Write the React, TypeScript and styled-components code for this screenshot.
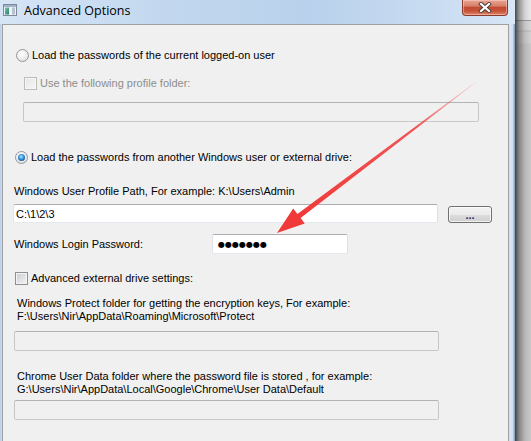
import React from "react";
import styled, { createGlobalStyle, css } from "styled-components";

const Global = createGlobalStyle`
  html, body { margin: 0; padding: 0; background: #f0f0f0; overflow: hidden; }
  body { font-family: "Liberation Sans", Arial, sans-serif; }
  #root { width: 531px; height: 441px; }
`;

const Screen = styled.div`
  position: relative;
  width: 531px;
  height: 441px;
  display: flex;
  overflow: hidden;
`;

const Window = styled.div`
  width: 515px;
  display: flex;
  flex-direction: column;
  flex: none;
`;

const TitleBar = styled.div`
  height: 24px;
  flex: none;
  display: flex;
  align-items: flex-start;
  padding: 0 7px 0 3px;
  box-sizing: border-box;
  background: linear-gradient(to right, #d6e5f6 0%, #c3d8ef 30%, #b9d1ec 60%, #c9dcf1 85%, #d8e6f6 100%);
`;

const AppIcon = styled.svg`
  margin-top: 4px;
  flex: none;
`;

const Title = styled.div`
  margin: 3px 0 0 7px;
  font-family: "Open Sans", "Liberation Sans", sans-serif;
  font-size: 12.5px;
  line-height: 16px;
  color: #000;
`;

const CloseButton = styled.div`
  margin-left: auto;
  width: 46px;
  height: 16px;
  box-sizing: border-box;
  border: 1px solid #8d3a2c;
  border-top: none;
  border-radius: 0 0 4px 4px;
  background: linear-gradient(to bottom, #e9a493 0%, #d8806a 40%, #c24a33 50%, #c95538 75%, #dc8a6c 100%);
  box-shadow: inset 0 0 0 1px rgba(255, 220, 210, 0.45);
  display: flex;
  align-items: center;
  justify-content: center;
`;

const Frame = styled.div`
  flex: 1;
  display: flex;
  padding: 0 6px 0 2px;
  background: linear-gradient(to right, #b9cfe8 0px, #cadcf0 2px, #cadcf0 calc(100% - 6px), #dbe7f5 calc(100% - 5px), #cddff2 calc(100% - 2px), #8fa6c0 calc(100% - 1px));
`;

const Content = styled.div`
  flex: 1;
  background: #f0f0f0;
  border: 1px solid #a0a0a0;
  border-bottom: none;
  display: flex;
  flex-direction: column;
  position: relative;
`;

const Backdrop = styled.div`
  flex: 1;
  display: flex;
  flex-direction: column;
  position: relative;
  &::after {
    content: "";
    position: absolute;
    inset: 0;
    background: linear-gradient(to right, rgba(40, 40, 40, 0.85) 0px, rgba(60, 60, 60, 0.55) 4px, rgba(80, 80, 80, 0.25) 10px, rgba(80, 80, 80, 0.12) 16px);
  }
`;

const BackdropTop = styled.div`
  height: 20px;
  background: #ffffff;
  border-bottom: 1px solid #a9a9a9;
  flex: none;
`;

const BackdropBody = styled.div`
  flex: 1;
  background: linear-gradient(to bottom, #ececec 0px, #ececec 9px, #c9c9c9 10px, #e4e4e4 11px, #e4e4e4 22px, #dadada 23px, #dadada 100%);
`;

const Row = styled.div<{ $top: number; $left: number }>`
  display: flex;
  align-items: center;
  margin-top: ${(p) => p.$top}px;
  padding-left: ${(p) => p.$left}px;
`;

const Label = styled.span<{ $disabled?: boolean; $gap?: number }>`
  font-size: 11px;
  line-height: 13px;
  color: ${(p) => (p.$disabled ? "#8d8d8d" : "#000")};
  margin-left: ${(p) => p.$gap ?? 0}px;
  white-space: nowrap;
`;

const Note = styled.div<{ $top: number; $left: number }>`
  font-size: 11px;
  line-height: 13px;
  color: #000;
  margin-top: ${(p) => p.$top}px;
  padding-left: ${(p) => p.$left}px;
  white-space: pre;
`;

const Radio = styled.span<{ $checked?: boolean }>`
  width: 13px;
  height: 13px;
  box-sizing: border-box;
  border-radius: 50%;
  border: 1px solid #95979a;
  background: radial-gradient(circle at 40% 35%, #ffffff 0%, #efefef 45%, #d6d7d9 100%);
  position: relative;
  flex: none;
  ${(p) =>
    p.$checked &&
    css`
      &::after {
        content: "";
        position: absolute;
        left: 2px;
        top: 2px;
        width: 7px;
        height: 7px;
        border-radius: 50%;
        background: radial-gradient(circle at 45% 40%, #b6ecff 0%, #3fa3e3 35%, #17589e 75%, #0d3c70 100%);
      }
    `}
`;

const Check = styled.span<{ $disabled?: boolean }>`
  width: 13px;
  height: 13px;
  box-sizing: border-box;
  flex: none;
  border: 1px solid ${(p) => (p.$disabled ? "#bcbcbc" : "#8e8f8f")};
  background: ${(p) =>
    p.$disabled
      ? "linear-gradient(135deg, #e6e6e6, #f6f6f6)"
      : "linear-gradient(135deg, #c9cdd2, #f4f4f4)"};
  box-shadow: inset 0 0 0 1px ${(p) => (p.$disabled ? "#f6f6f6" : "#f4f4f4")};
`;

const TextBox = styled.div<{ $disabled?: boolean; $width: number; $height: number }>`
  box-sizing: border-box;
  width: ${(p) => p.$width}px;
  height: ${(p) => p.$height}px;
  flex: none;
  border: 1px solid;
  border-radius: 2px;
  ${(p) =>
    p.$disabled
      ? css`
          background: #f0f0f0;
          border-color: #b3b3b3 #c6c6c6 #c9c9c9 #c6c6c6;
        `
      : css`
          background: #ffffff;
          border-color: #abadb3 #dbdfe6 #e3e9ef #e2e3ea;
        `}
  display: flex;
  align-items: center;
  padding-left: 2px;
  font-size: 11px;
  color: #000;
`;

const Dots = styled.span`
  font-family: "DejaVu Sans", sans-serif;
  font-size: 8px;
  letter-spacing: 0px;
  color: #000;
  padding-left: 3px;
`;

const BrowseButton = styled.div`
  box-sizing: border-box;
  width: 44px;
  height: 17px;
  margin: 2px 0 0 10px;
  border: 1px solid #707070;
  border-radius: 3px;
  background: linear-gradient(to bottom, #f2f2f2 0%, #ebebeb 50%, #dddddd 51%, #cfcfcf 100%);
  box-shadow: inset 0 0 0 1px rgba(255, 255, 255, 0.7);
  display: flex;
  align-items: flex-end;
  justify-content: center;
  font-size: 11px;
  line-height: 13px;
  color: #2a1d6e;
  font-weight: bold;
`;

const PasswordLabel = styled.span`
  font-size: 11px;
  line-height: 13px;
  width: 198px;
  flex: none;
`;

const ArrowLayer = styled.svg`
  position: absolute;
  left: 0;
  top: 0;
  pointer-events: none;
`;

export default function App() {
  return (
    <>
      <Global />
      <Screen>
        <Window>
          <TitleBar>
            <AppIcon width="14" height="12" viewBox="0 0 14 12">
              <defs>
                <linearGradient id="ig" x1="0" y1="0" x2="1" y2="1">
                  <stop offset="0" stopColor="#7fc4a8" />
                  <stop offset="1" stopColor="#1f7f6e" />
                </linearGradient>
              </defs>
              <rect x="0.5" y="0.5" width="13" height="11" fill="#eef2f6" stroke="#7d8a98" />
              <rect x="1" y="1" width="12" height="2" fill="#9fb4cb" />
              <rect x="2" y="3.5" width="4" height="7" fill="url(#ig)" />
              <rect x="9" y="3.5" width="3" height="7" fill="#b8c2cc" />
            </AppIcon>
            <Title>Advanced Options</Title>
            <CloseButton>
              <svg width="14" height="11" viewBox="0 0 14 11">
                <path d="M3 2 L11 9 M11 2 L3 9" stroke="#4a3b3b" strokeWidth="4" strokeLinecap="square" />
                <path d="M3 2 L11 9 M11 2 L3 9" stroke="#ffffff" strokeWidth="2.2" strokeLinecap="square" />
              </svg>
            </CloseButton>
          </TitleBar>
          <Frame>
            <Content>
              <Row $top={24} $left={13}>
                <Radio />
                <Label $gap={3}>Load the passwords of the current logged-on user</Label>
              </Row>
              <Row $top={15} $left={21}>
                <Check $disabled />
                <Label $disabled $gap={3}>Use the following profile folder:</Label>
              </Row>
              <Row $top={12} $left={20}>
                <TextBox $disabled $width={456} $height={20} />
              </Row>
              <Row $top={29} $left={12}>
                <Radio $checked />
                <Label $gap={3}>Load the passwords from another Windows user or external drive:</Label>
              </Row>
              <Row $top={21} $left={11}>
                <Label>Windows User Profile Path, For example: K:\Users\Admin</Label>
              </Row>
              <Row $top={6} $left={10}>
                <TextBox $width={425} $height={19}>C:\1\2\3</TextBox>
                <BrowseButton>...</BrowseButton>
              </Row>
              <Row $top={11} $left={11}>
                <PasswordLabel>Windows Login Password:</PasswordLabel>
                <TextBox $width={136} $height={20}>
                  <Dots>●●●●●●●</Dots>
                </TextBox>
              </Row>
              <Row $top={18} $left={12}>
                <Check />
                <Label $gap={3}>Advanced external drive settings:</Label>
              </Row>
              <Note $top={12} $left={14}>
                {"Windows Protect folder for getting the encryption keys, For example:\nF:\\Users\\Nir\\AppData\\Roaming\\Microsoft\\Protect"}
              </Note>
              <Row $top={8} $left={11}>
                <TextBox $disabled $width={425} $height={20} />
              </Row>
              <Note $top={19} $left={14}>
                {"Chrome User Data folder where the password file is stored , for example:\nG:\\Users\\Nir\\AppData\\Local\\Google\\Chrome\\User Data\\Default"}
              </Note>
              <Row $top={4} $left={11}>
                <TextBox $disabled $width={425} $height={20} />
              </Row>
            </Content>
          </Frame>
        </Window>
        <Backdrop>
          <BackdropTop />
          <BackdropBody />
        </Backdrop>
        <ArrowLayer width="531" height="441" viewBox="0 0 531 441">
          <defs>
            <linearGradient id="ag" gradientUnits="userSpaceOnUse" x1="476" y1="82" x2="299" y2="216">
              <stop offset="0" stopColor="#f03a3a" stopOpacity="0.1" />
              <stop offset="0.35" stopColor="#f03a3a" stopOpacity="0.85" />
              <stop offset="1" stopColor="#f03a3a" stopOpacity="1" />
            </linearGradient>
          </defs>
          <polygon
            points="476.2,82.3 300.6,218.1 304.8,223.6 277,233 293.2,208.6 297.4,213.9 475.8,81.7"
            fill="url(#ag)"
          />
        </ArrowLayer>
      </Screen>
    </>
  );
}
